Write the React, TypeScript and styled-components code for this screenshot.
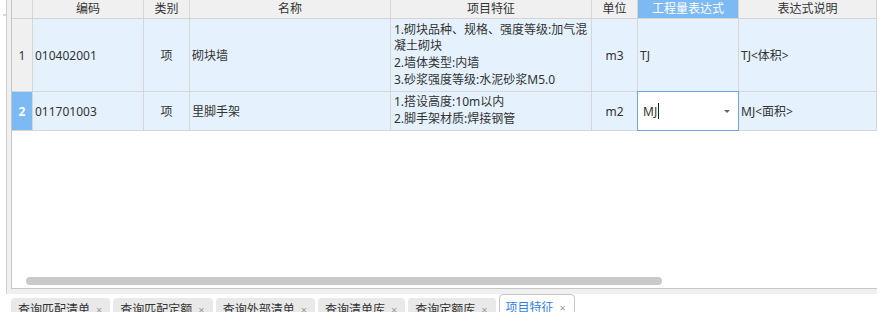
import React from "react";
import styled, { createGlobalStyle } from "styled-components";

const GlobalStyle = createGlobalStyle`
  html, body {
    margin: 0;
    padding: 0;
    background: #fff;
  }
  body {
    font-family: "Noto Sans", "Noto Sans CJK SC", sans-serif;
    font-size: 12px;
    color: #333;
  }
  * {
    box-sizing: border-box;
  }
`;

const COLS = "21px 111px 46px 201px 201px 46px 101px 1fr";

type Align = "left" | "center";

const columns: { title: string; align: Align; active?: boolean }[] = [
  { title: "编码", align: "left" },
  { title: "类别", align: "center" },
  { title: "名称", align: "left" },
  { title: "项目特征", align: "left" },
  { title: "单位", align: "center" },
  { title: "工程量表达式", align: "left", active: true },
  { title: "表达式说明", align: "left" },
];

const rows = [
  {
    no: 1,
    height: 72,
    code: "010402001",
    kind: "项",
    name: "砌块墙",
    feature: [
      "1.砌块品种、规格、强度等级:加气混",
      "凝土砌块",
      "2.墙体类型:内墙",
      "3.砂浆强度等级:水泥砂浆M5.0",
    ],
    unit: "m3",
    expr: "TJ",
    desc: "TJ<体积>",
  },
  {
    no: 2,
    height: 38,
    code: "011701003",
    kind: "项",
    name: "里脚手架",
    feature: ["1.搭设高度:10m以内", "2.脚手架材质:焊接钢管"],
    unit: "m2",
    expr: "MJ",
    desc: "MJ<面积>",
    editing: true,
  },
];

const tabs = ["查询匹配清单", "查询匹配定额", "查询外部清单", "查询清单库", "查询定额库", "项目特征"];
const activeTab = "项目特征";

const Page = styled.div`
  width: 877px;
  height: 312px;
  overflow: hidden;
  display: flex;
  flex-direction: column;
`;

const TopArea = styled.div`
  height: 294px;
  flex-shrink: 0;
  display: flex;
`;

const Splitter = styled.div`
  width: 7px;
  border-right: 1px solid #cfcfcf;
  position: relative;
  &::after {
    content: "";
    position: absolute;
    left: 3px;
    top: 14px;
    width: 3px;
    height: 2px;
    background: #d8d8d8;
  }
`;

const Workspace = styled.div`
  flex: 1;
  min-width: 0;
  background: #f0f0f0;
  padding: 0 0 5px 4px;
  display: flex;
`;

const GridPanel = styled.div`
  flex: 1;
  min-width: 0;
  background: #fff;
  border-left: 1px solid #c6c6c6;
  border-bottom: 1px solid #c6c6c6;
  display: flex;
  flex-direction: column;
`;

const HeaderRow = styled.div`
  display: grid;
  grid-template-columns: ${COLS};
  height: 19px;
  border-bottom: 1px solid #d4d4d4;
`;

const HeaderCell = styled.div<{ $active?: boolean }>`
  border-right: 1px solid #d6d6d6;
  background: ${(p) => (p.$active ? "#7db9f3" : "#f0f0f0")};
  color: ${(p) => (p.$active ? "#fff" : "#333")};
  text-align: center;
  line-height: 18px;
  white-space: nowrap;
  overflow: hidden;
`;

const Row = styled.div<{ $height: number }>`
  display: grid;
  grid-template-columns: ${COLS};
  height: ${(p) => p.$height + 1}px;
  border-bottom: 1px solid #d6d6d6;
`;

const RowNum = styled.div<{ $selected?: boolean }>`
  border-right: 1px solid #d6d6d6;
  background: ${(p) => (p.$selected ? "#7db9f3" : "#f0f0f0")};
  color: ${(p) => (p.$selected ? "#fff" : "#333")};
  font-weight: ${(p) => (p.$selected ? 700 : 400)};
  display: flex;
  align-items: center;
  justify-content: center;
`;

const Cell = styled.div<{ $align: Align }>`
  position: relative;
  border-right: 1px solid #d6d6d6;
  background: #e5f2fd;
  display: flex;
  align-items: center;
  justify-content: ${(p) => (p.$align === "center" ? "center" : "flex-start")};
  padding: 0 2px;
  white-space: nowrap;
`;

const FeatureText = styled.div`
  line-height: 16.6px;
  padding-left: 1px;
`;

const Editor = styled.div`
  position: absolute;
  top: -1px;
  left: -1px;
  right: -1px;
  bottom: -1px;
  background: #fff;
  border: 1px solid #6ea8e4;
  display: flex;
  align-items: center;
  padding: 0 5px;
  z-index: 1;
`;

const Caret = styled.span`
  display: inline-block;
  width: 1px;
  height: 16px;
  background: #222;
  margin-left: 1px;
`;

const DropArrow = styled.span`
  margin-left: auto;
  margin-right: 3px;
  width: 0;
  height: 0;
  border-left: 3px solid transparent;
  border-right: 3px solid transparent;
  border-top: 3px solid #666;
`;

const ScrollArea = styled.div`
  margin-top: auto;
  padding: 0 0 3px 14px;
`;

const ScrollThumb = styled.div`
  height: 8px;
  border-radius: 4px;
  background: #c9c9c9;
`;

const TabBar = styled.div`
  flex: 1;
  min-height: 0;
  overflow: hidden;
  display: flex;
  align-items: flex-start;
  gap: 3px;
  padding-left: 11px;
  background: #fff;
`;

const Tab = styled.div<{ $active?: boolean }>`
  display: flex;
  align-items: flex-start;
  flex-shrink: 0;
  height: 24px;
  margin-top: ${(p) => (p.$active ? "0" : "4px")};
  padding: ${(p) => (p.$active ? "5px 8px 0 6px" : "4px 8px 0 7px")};
  line-height: 16px;
  border-radius: 4px 4px 0 0;
  background: ${(p) => (p.$active ? "#fff" : "#e9e9e9")};
  border: ${(p) => (p.$active ? "1px solid #c6c6c6" : "none")};
  color: ${(p) => (p.$active ? "#2f7fe6" : "#333")};
  white-space: nowrap;
`;

const Close = styled.span`
  margin-left: 6px;
  font-size: 11px;
  color: #9a9a9a;
`;

function App() {
  const thumbWidth = Math.round(858 * 0.741);

  return (
    <>
      <GlobalStyle />
      <Page>
        <TopArea>
          <Splitter />
          <Workspace>
            <GridPanel>
              <HeaderRow>
                <HeaderCell />
                {columns.map((c) => (
                  <HeaderCell key={c.title} $active={c.active}>
                    {c.title}
                  </HeaderCell>
                ))}
              </HeaderRow>
              {rows.map((r) => (
                <Row key={r.no} $height={r.height}>
                  <RowNum $selected={r.editing}>{r.no}</RowNum>
                  <Cell $align="left">{r.code}</Cell>
                  <Cell $align="center">{r.kind}</Cell>
                  <Cell $align="left">{r.name}</Cell>
                  <Cell $align="left">
                    <FeatureText>
                      {r.feature.map((line) => (
                        <div key={line}>{line}</div>
                      ))}
                    </FeatureText>
                  </Cell>
                  <Cell $align="center">{r.unit}</Cell>
                  <Cell $align="left">
                    {r.editing ? (
                      <Editor>
                        {r.expr}
                        <Caret />
                        <DropArrow />
                      </Editor>
                    ) : (
                      r.expr
                    )}
                  </Cell>
                  <Cell $align="left">{r.desc}</Cell>
                </Row>
              ))}
              <ScrollArea>
                <ScrollThumb style={{ width: thumbWidth }} />
              </ScrollArea>
            </GridPanel>
          </Workspace>
        </TopArea>
        <TabBar>
          {tabs.map((t) => (
            <Tab key={t} $active={t === activeTab}>
              {t}
              <Close>×</Close>
            </Tab>
          ))}
        </TabBar>
      </Page>
    </>
  );
}

export default App;
